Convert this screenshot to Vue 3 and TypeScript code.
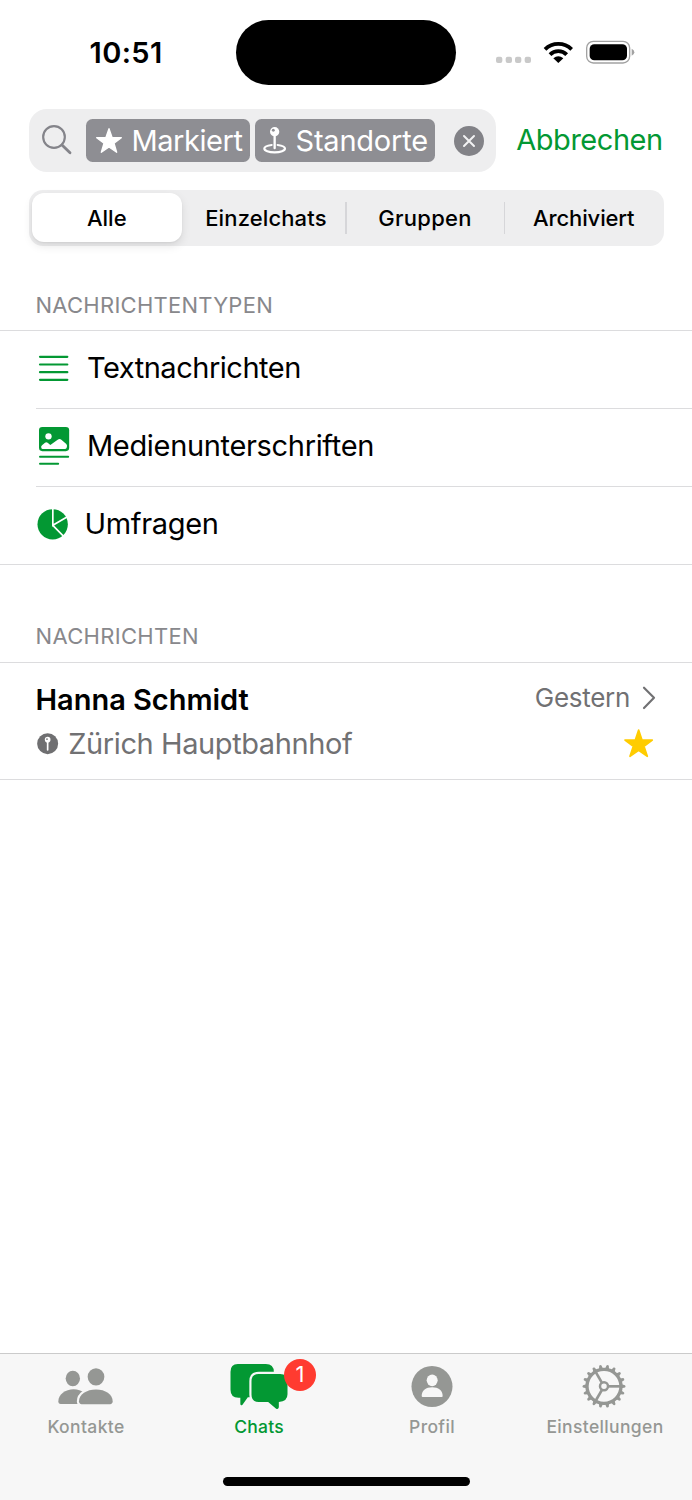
<script setup lang="ts">
interface Segment { label: string; cls: string }
interface MessageType { id: 'text' | 'media' | 'poll'; label: string }
interface Tab { id: 'contacts' | 'chats' | 'profile' | 'settings'; label: string; badge?: number }

const segments: Segment[] = [
  { label: 'Alle', cls: 'active' },
  { label: 'Einzelchats', cls: 'single' },
  { label: 'Gruppen', cls: 'groups divided' },
  { label: 'Archiviert', cls: 'archived divided' },
]

const types: MessageType[] = [
  { id: 'text', label: 'Textnachrichten' },
  { id: 'media', label: 'Medienunterschriften' },
  { id: 'poll', label: 'Umfragen' },
]

const tabs: Tab[] = [
  { id: 'contacts', label: 'Kontakte' },
  { id: 'chats', label: 'Chats', badge: 1 },
  { id: 'profile', label: 'Profil' },
  { id: 'settings', label: 'Einstellungen' },
]

const teeth = Array.from({ length: 18 }, (_, i) => i * 20)
const spokes = [0, 120, 240]
</script>

<template>
  <div class="screen">
    <header class="status">
      <div class="time">10:51</div>
      <div class="island"></div>
      <svg class="indicators" viewBox="450 118 420 72">
        <g fill="#c9c9c9">
          <rect x="450" y="168" width="19" height="19" rx="6" />
          <rect x="479" y="168" width="19" height="19" rx="6" />
          <rect x="507" y="168" width="19" height="19" rx="6" />
          <rect x="536" y="168" width="19" height="19" rx="6" />
        </g>
        <g fill="none" stroke="#000" stroke-width="11.500">
          <path d="M597 146 A57.500 57.500 0 0 1 677 146" />
          <path d="M612 162 A35 35 0 0 1 662 162" />
        </g>
        <path d="M637 187 L622 173 Q637 161 652 173 Z" />
        <rect x="722" y="122" width="129" height="65" rx="20" fill="none" stroke="#a2a2a2" stroke-width="4" />
        <rect x="731" y="130.500" width="112" height="48.500" rx="14" />
        <path d="M857 144 Q865 147 865 154.500 Q865 162 857 165 Z" fill="#a2a2a2" />
      </svg>
    </header>

    <div class="search">
      <div class="field">
        <svg class="glass" viewBox="0 0 90 90" fill="none" stroke="#84848a" stroke-linecap="round">
          <circle cx="36" cy="36" r="32.500" stroke-width="6.500" />
          <path d="M60 60 L84 83" stroke-width="8.500" />
        </svg>
        <div class="chip starred">
          <svg class="chip-star" viewBox="0 0 78 76">
            <path d="M39 2 L48 28 L76 29 L54 46 L62 73 L39 57 L16 73 L24 46 L2 29 L30 28 Z" fill="#fff" stroke="#fff" stroke-width="4" stroke-linejoin="round" />
          </svg>
          <span>Markiert</span>
        </div>
        <div class="chip places">
          <svg class="chip-pin" viewBox="40 34 70 84">
            <path d="M66 91 C50 93 44 97 44 101.500 C44 108 57 113 75 113 C93 113 106 108 106 101.500 C106 97 100 93 84 91" fill="none" stroke="#fff" stroke-width="6.500" stroke-linecap="round" />
            <path d="M75 60 V100" stroke="#fff" stroke-width="7" stroke-linecap="round" />
            <circle cx="75" cy="51" r="14" fill="#fff" />
            <circle cx="71" cy="47" r="4.500" fill="#8e8e93" />
          </svg>
          <span>Standorte</span>
        </div>
        <svg class="clear" viewBox="0 0 90 90">
          <circle cx="45" cy="45" r="45" fill="#828287" />
          <path d="M30 30 L60 60 M60 30 L30 60" stroke="#f2f2f3" stroke-width="6" stroke-linecap="round" />
        </svg>
      </div>
      <div class="cancel">Abbrechen</div>
    </div>

    <div class="segments">
      <div v-for="s in segments" :key="s.label" class="segment" :class="s.cls"><span>{{ s.label }}</span></div>
    </div>

    <section>
      <h2 class="heading types-heading">NACHRICHTENTYPEN</h2>
      <div class="list">
        <div v-for="t in types" :key="t.id" class="row" :class="t.id">
          <svg v-if="t.id === 'text'" viewBox="108 153 108 231" class="row-icon">
            <path d="M120 230.500 H202 M120 253.500 H202 M120 276.500 H202 M120 299.500 H202" stroke="#039833" stroke-width="6.500" stroke-linecap="round" />
          </svg>
          <svg v-else-if="t.id === 'media'" viewBox="108 387 108 231" class="row-icon">
            <rect x="117" y="441" width="90.500" height="72.500" rx="10" fill="#039833" />
            <circle cx="145.500" cy="469" r="9.500" fill="#fff" />
            <path d="M124 504 Q122 500 126 496 L135 488 Q139 485 143 488 L151 495 L173 479 Q179 475 184 479 L199 492 Q203 497 200 503 Q199 507 194 507 H128 Q125 507 124 504 Z" fill="#fff" />
            <path d="M120 530.500 H204.500 M120 551 H174.500" stroke="#039833" stroke-width="6" stroke-linecap="round" />
          </svg>
          <svg v-else viewBox="108 621 108 231" class="row-icon">
            <circle cx="158" cy="733" r="45.500" fill="#039833" />
            <path d="M158.500 684 V736 L206 708 M158.500 736 L191 769" fill="none" stroke="#fff" stroke-width="5" />
          </svg>
          <span class="row-label">{{ t.label }}</span>
        </div>
      </div>
    </section>

    <section>
      <h2 class="heading messages-heading">NACHRICHTEN</h2>
      <div class="message">
        <div class="line top">
          <span class="name">Hanna Schmidt</span>
          <span class="date">Gestern</span>
          <svg class="chevron" viewBox="0 0 42 72" fill="none" stroke="#717173" stroke-width="6.500" stroke-linecap="round" stroke-linejoin="round">
            <path d="M6 5 L36 35 L6 66" />
          </svg>
        </div>
        <div class="line bottom">
          <svg class="place" viewBox="0 0 64 64">
            <circle cx="32" cy="32" r="31.500" fill="#6f6f71" />
            <circle cx="32" cy="20" r="8.500" fill="#fff" />
            <circle cx="30" cy="18.500" r="2.500" fill="#6f6f71" />
            <path d="M32 26 V51" stroke="#fff" stroke-width="5" stroke-linecap="round" />
          </svg>
          <span class="preview">Zürich Hauptbahnhof</span>
          <svg class="star" viewBox="0 0 88 86">
            <path d="M44 3 L54 33 L85 33 L60 52 L70 82 L44 64 L18 82 L28 52 L3 33 L34 33 Z" fill="#fc0" stroke="#fc0" stroke-width="5" stroke-linejoin="round" />
          </svg>
        </div>
      </div>
    </section>

    <nav class="tabbar">
      <div v-for="t in tabs" :key="t.id" class="tab" :class="t.id">
        <svg v-if="t.id === 'contacts'" class="tab-icon" viewBox="170 60 180 156" fill="#959794">
          <ellipse cx="220.500" cy="115.500" rx="21.500" ry="23" />
          <ellipse cx="290" cy="110.500" rx="25" ry="26" />
          <path d="M177 184 C177 163 198 148 223 148 C248 148 266 163 266 184 Q266 192 258 192 H184 Q177 192 177 184 Z" />
          <path d="M239 184 C239 163 262 148.500 290 148.500 C318 148.500 340 163 340 184 Q340 192.500 332 192.500 H247 Q239 192.500 239 184 Z" stroke="#f7f7f7" stroke-width="13" paint-order="stroke" />
        </svg>
        <svg v-else-if="t.id === 'chats'" class="tab-icon" viewBox="28.500 30 180 156" fill="#039833">
          <path d="M55 42 H139 Q163 42 163 66 V142 H85 L69 164 Q63 169 62.500 161 V143 H57 Q33 143 33 119 V65 Q33 42 55 42 Z" />
          <path d="M118 72 H182 Q204 72 204 94 V133 Q204 155 178 156 V172 Q176 180 170 176 L146 156 H118 Q96 156 96 134 V94 Q96 72 118 72 Z" stroke="#f7f7f7" stroke-width="13" paint-order="stroke" />
        </svg>
        <svg v-else-if="t.id === 'profile'" class="tab-icon" viewBox="169 60 180 156">
          <circle cx="259" cy="139.500" r="61.500" fill="#959794" />
          <ellipse cx="259.500" cy="121" rx="16.500" ry="17.500" fill="#f7f7f7" />
          <path d="M228 168 C228 151 241 142 259.500 142 C278 142 291 151 291 168 Q291 171 288 171 H231 Q228 171 228 168 Z" fill="#f7f7f7" />
        </svg>
        <svg v-else class="tab-icon" viewBox="-87 -79 180 156" fill="none" stroke="#959794">
          <circle r="51" stroke-width="10" />
          <circle r="12" stroke-width="7.500" />
          <path v-for="a in spokes" :key="`s${a}`" :transform="`rotate(${a})`" d="M14 0 H50" stroke-width="8" />
          <path v-for="a in teeth" :key="`t${a}`" :transform="`rotate(${a})`" d="M53 -6 L63 -3.500 Q66.500 0 63 3.500 L53 6 Z" fill="#959794" stroke="none" />
        </svg>
        <span v-if="t.badge" class="badge">{{ t.badge }}</span>
        <span class="tab-label">{{ t.label }}</span>
      </div>
      <div class="home"></div>
    </nav>
  </div>
</template>

<style>
body { margin: 0; background: #fff; }
</style>

<style scoped>
.screen {
  width: 692px;
  height: 1500px;
  display: flex;
  flex-direction: column;
  background: #fff;
  color: #000;
  font-family: Inter, 'Liberation Sans', sans-serif;
  overflow: hidden;
}
.screen * { box-sizing: border-box; }
svg { display: block; flex: none; overflow: visible; }
span { white-space: nowrap; }

.status {
  height: 108.7px;
  flex: none;
  display: grid;
  grid-template-columns: 236px 220px 236px;
  align-items: start;
}
.time { padding: 35px 0 0 89.500px; font-size: 29px; line-height: 35px; font-weight: 600; letter-spacing: .4px; }
.island { height: 64.600px; margin-top: 20px; border-radius: 33px; background: #000; }
.indicators { width: 140px; height: 24px; margin: 39.700px 0 0 40px; }

.search { display: flex; height: 63px; flex: none; padding-left: 28.500px; }
.field {
  width: 467.500px;
  display: flex;
  align-items: center;
  border-radius: 18px;
  background: #eeeeef;
  padding-left: 13.500px;
}
.glass { width: 30px; height: 30px; }
.chip {
  height: 43px;
  display: flex;
  align-items: center;
  border-radius: 6.500px;
  background: #8e8e93;
  color: #fff;
  font-size: 29px;
  line-height: 36px;
}
.chip span { position: relative; top: 1px; }
.starred { width: 164px; margin-left: 14px; padding-left: 9.500px; letter-spacing: -.44px; }
.chip-star { width: 26px; height: 25.300px; margin-right: 10px; }
.places { width: 180px; margin-left: 5px; padding-left: 8.300px; letter-spacing: -.23px; }
.chip-pin { width: 23.300px; height: 28px; margin-right: 9px; }
.clear { width: 30px; height: 30px; margin: 1px 0 0 19px; }
.cancel { margin-left: 20.300px; color: #039833; font-size: 29px; line-height: 61px; letter-spacing: -.47px; }

.segments {
  width: 635px;
  height: 56px;
  flex: none;
  margin: 18.300px 0 0 28.500px;
  display: grid;
  grid-template-columns: repeat(4, 1fr);
  border-radius: 14px;
  background: #eeeeef;
  font-size: 22px;
  font-weight: 450;
}
.segment { display: flex; align-items: center; justify-content: center; }
.active {
  margin: 3px 5.500px 3.500px 3.300px;
  border-radius: 12px;
  background: #fff;
  font-weight: 550;
  box-shadow: 0 4px 10px rgba(0, 0, 0, .1), 0 1px 2px rgba(0, 0, 0, .05);
}
.single { letter-spacing: .13px; }
.groups { letter-spacing: .3px; }
.archived { letter-spacing: -.13px; }
.segment span { position: relative; left: -.7px; }
.active span { left: 0; }
.divided::before { content: ''; width: 1.500px; height: 32px; background: #d6d6d9; margin-left: -.8px; margin-right: auto; }
.divided span { margin-right: auto; }

.heading { margin: 0; padding-left: 35.500px; font-size: 22px; font-weight: 400; color: #88888c; line-height: 28px; }
.types-heading { height: 84px; padding-top: 45px; letter-spacing: .26px; }
.messages-heading { height: 97px; padding-top: 57px; letter-spacing: .32px; }

.list { border-top: 1px solid #dcdcde; border-bottom: 1px solid #dcdcde; }
.row { height: 78px; margin-left: 35.500px; display: flex; border-bottom: 1px solid #dcdcde; font-size: 29px; line-height: 74px; }
.row:last-child { height: 77px; border-bottom: 0; }
.row-icon { width: 36px; height: 77px; }
.row-label { margin-left: 15.500px; }
.text .row-label { letter-spacing: -.48px; }
.media .row-label { letter-spacing: -.33px; }
.poll .row-label { margin-left: 13px; letter-spacing: -.32px; }

.message { height: 118px; border-top: 1px solid #dcdcde; border-bottom: 1px solid #dcdcde; padding: 15px 36px 0 35.500px; }
.line { display: flex; align-items: center; height: 44px; }
.name { font-size: 29px; font-weight: 600; flex: 1; letter-spacing: -.03px; }
.date { font-size: 26px; color: #717173; letter-spacing: -.3px; position: relative; top: -2px; }
.chevron { width: 14px; height: 24px; margin: 0 0 3px 12px; }
.place { width: 21.300px; height: 21.300px; margin: 0 0 0 1.300px; }
.preview { flex: 1; margin-left: 10.200px; font-size: 29px; color: #717173; letter-spacing: -.41px; }
.star { width: 29.300px; height: 28.700px; margin: 0 2.300px 1.500px 0; }

.tabbar {
  position: relative;
  margin-top: auto;
  height: 147px;
  flex: none;
  display: grid;
  grid-template-columns: repeat(4, 1fr);
  border-top: 1px solid #cbcbcb;
  background: #f7f7f7;
  color: #959794;
}
.tab { position: relative; display: flex; flex-direction: column; align-items: center; padding: 6px 1px 0 0; }
.tab-icon { width: 60px; height: 52px; }
.tab-label { margin-top: 4px; font-size: 17.500px; line-height: 22px; font-weight: 500; letter-spacing: .36px; }
.chats { color: #039833; }
.chats .tab-label { letter-spacing: .2px; }
.badge {
  position: absolute;
  left: 111px;
  top: 5px;
  width: 32px;
  height: 32px;
  border-radius: 50%;
  background: #ff3b30;
  color: #fff;
  font-size: 22px;
  line-height: 31px;
  text-align: center;
}
.home { position: absolute; left: 223px; top: 122.800px; width: 246.500px; height: 9px; border-radius: 5px; background: #000; }
</style>
